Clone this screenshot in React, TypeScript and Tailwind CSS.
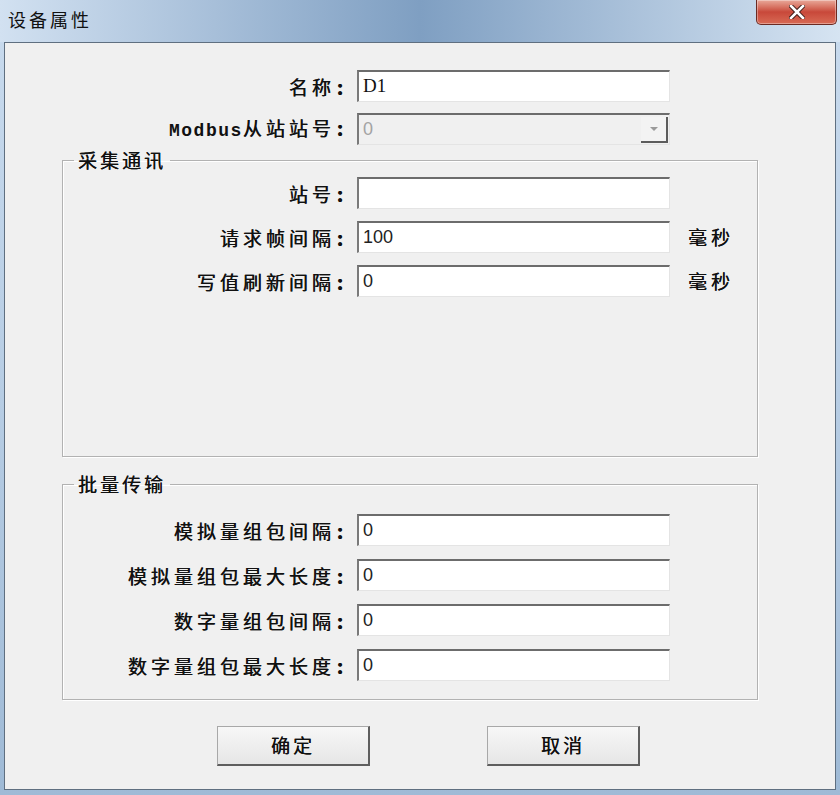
const cjk = "font-['Noto_Sans_CJK_SC',sans-serif]";
const ink = "text-[#111] [text-shadow:0.35px_0_0_#111]";

function TextBox({ value, serif }: { value: string; serif?: boolean }) {
  return (
    <div className="flex h-[32px] w-[313px] items-center border-t-2 border-l-2 border-r border-b border-t-[#6c6c6c] border-l-[#7a7a7a] border-r-[#e4e4e4] border-b-[#e4e4e4] bg-white pl-[4px]">
      <span
        className={
          serif
            ? "font-['Liberation_Serif',serif] text-[19px] text-[#111]"
            : "font-['Liberation_Sans',sans-serif] text-[18px] text-[#222]"
        }
      >
        {value}
      </span>
    </div>
  );
}

function Label({ text, width }: { text: React.ReactNode; width: string }) {
  return (
    <div className={`${width} shrink-0 pr-[1px] text-right text-[19px] leading-none tracking-[4px] ${ink} ${cjk}`}>
      {text}
      <span className="ml-[2px] font-bold tracking-[3px]">:</span>
    </div>
  );
}

function Row({ label, value, unit, width }: { label: string; value: string; unit?: boolean; width: string }) {
  return (
    <div className="flex h-[32px] items-center">
      <Label text={label} width={width} />
      <div className="ml-[10px]">
        <TextBox value={value} />
      </div>
      {unit && (
        <span className={`ml-[18px] text-[19px] tracking-[4px] ${ink} ${cjk}`}>毫秒</span>
      )}
    </div>
  );
}

function Button({ text }: { text: string }) {
  return (
    <button className="flex h-[40px] w-[153px] items-center justify-center border border-t-[#a8a8a8] border-l-[#a8a8a8] border-r-2 border-b-2 border-r-[#5e5e5e] border-b-[#5e5e5e] bg-gradient-to-b from-[#f7f7f7] to-[#e6e6e6]">
      <span className={`text-[19px] tracking-[3px] ${ink} ${cjk}`}>{text}</span>
    </button>
  );
}

function Group({ title, children, className }: { title: string; children: React.ReactNode; className: string }) {
  return (
    <fieldset className={`ml-[57px] w-[696px] border border-[#b2b2b2] shadow-[inset_1px_1px_0_#fff,1px_1px_0_#fff] ${className}`}>
      <legend className={`ml-[11px] px-[4px] text-[19px] leading-[20px] tracking-[3px] ${ink} ${cjk}`}>
        {title}
      </legend>
      {children}
    </fieldset>
  );
}

export default function App() {
  return (
    <div className="flex h-[795px] w-[840px] flex-col bg-gradient-to-b from-[#c9dbee] via-[#b7cde4] to-[#9fbad6]">
      {/* title bar */}
      <div className="flex h-[42px] items-start justify-between bg-gradient-to-r from-[#d2e1f1] via-[#7f9fc2] to-[#d6e4f2]">
        <span className={`ml-[8px] mt-[8px] text-[18px] leading-[22px] tracking-[3px] text-[#111] ${cjk}`}>设备属性</span>
        <div className="mr-[3px] flex h-[25px] w-[81px] items-center justify-center rounded-b-[5px] border border-t-0 border-[#6b2a22] bg-gradient-to-b from-[#e8a89a] via-[#c8483a] to-[#d86a55] shadow-[inset_0_0_0_1px_rgba(255,255,255,0.35)]">
          <svg width="16" height="14" viewBox="0 0 16 14">
            <path d="M2 1 L14 13 M14 1 L2 13" stroke="#3a1a16" strokeWidth="4.5" strokeLinecap="square" />
            <path d="M2 1 L14 13 M14 1 L2 13" stroke="#ffffff" strokeWidth="2.6" strokeLinecap="square" />
          </svg>
        </div>
      </div>

      {/* client area */}
      <div className="mx-[4px] h-[748px] border border-[#5f6f80] bg-[#f0f0f0]">
        <div className="flex flex-col pt-[27px]">
          <div className="flex h-[32px] items-center">
            <Label text="名称" width="w-[342px]" />
            <div className="ml-[10px]">
              <TextBox value="D1" serif />
            </div>
          </div>

          <div className="mt-[11px] flex h-[32px] items-center">
            <Label
              width="w-[342px]"
              text={
                <>
                  <span className="font-['Liberation_Mono',monospace] text-[18px] font-bold tracking-[1.5px] [text-shadow:none]">Modbus</span>
                  从站站号
                </>
              }
            />
            <div className="ml-[10px] flex h-[32px] w-[313px] items-center border-t-2 border-l-2 border-r border-b border-t-[#6c6c6c] border-l-[#7a7a7a] border-r-[#e4e4e4] border-b-[#e4e4e4] bg-[#f0f0f0] pl-[4px]">
              <span className="flex-1 font-['Liberation_Sans',sans-serif] text-[18px] text-[#a3a3a3]">0</span>
              <div className="mr-[1px] flex h-[26px] w-[27px] items-center justify-center border-r-2 border-b-2 border-r-[#5c5c5c] border-b-[#5c5c5c] bg-[#f3f3f3]">
                <svg width="10" height="6" viewBox="0 0 10 6">
                  <path d="M1 1 L9 1 L5 5 Z" fill="#9a9a9a" />
                </svg>
              </div>
            </div>
          </div>

          <Group title="采集通讯" className="mt-[5px] h-[307px] pt-[7px]">
            <div className="flex flex-col gap-[12px]">
              <Row label="站号" value="" width="w-[284px]" />
              <Row label="请求帧间隔" value="100" unit width="w-[284px]" />
              <Row label="写值刷新间隔" value="0" unit width="w-[284px]" />
            </div>
          </Group>

          <Group title="批量传输" className="mt-[17px] h-[226px] pt-[20px]">
            <div className="flex flex-col gap-[13px]">
              <Row label="模拟量组包间隔" value="0" width="w-[284px]" />
              <Row label="模拟量组包最大长度" value="0" width="w-[284px]" />
              <Row label="数字量组包间隔" value="0" width="w-[284px]" />
              <Row label="数字量组包最大长度" value="0" width="w-[284px]" />
            </div>
          </Group>

          <div className="ml-[212px] mt-[26px] flex gap-[117px]">
            <Button text="确定" />
            <Button text="取消" />
          </div>
        </div>
      </div>
    </div>
  );
}
